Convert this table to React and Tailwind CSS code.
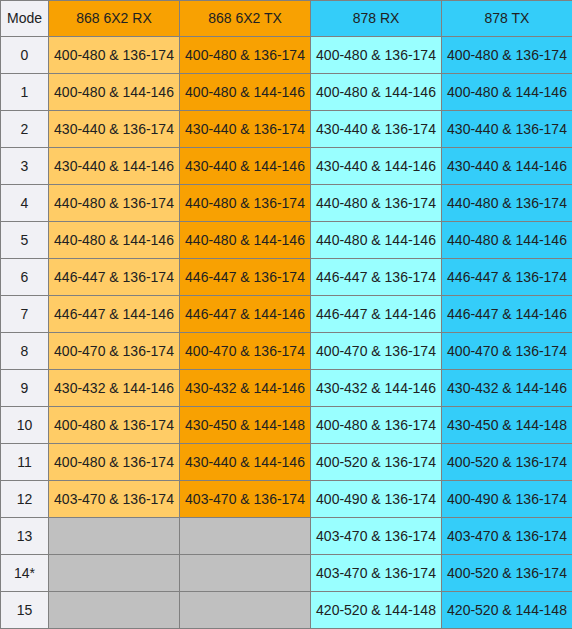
import { Fragment } from "react";

const rows = [
  ["0", "400-480 & 136-174", "400-480 & 136-174", "400-480 & 136-174", "400-480 & 136-174"],
  ["1", "400-480 & 144-146", "400-480 & 144-146", "400-480 & 144-146", "400-480 & 144-146"],
  ["2", "430-440 & 136-174", "430-440 & 136-174", "430-440 & 136-174", "430-440 & 136-174"],
  ["3", "430-440 & 144-146", "430-440 & 144-146", "430-440 & 144-146", "430-440 & 144-146"],
  ["4", "440-480 & 136-174", "440-480 & 136-174", "440-480 & 136-174", "440-480 & 136-174"],
  ["5", "440-480 & 144-146", "440-480 & 144-146", "440-480 & 144-146", "440-480 & 144-146"],
  ["6", "446-447 & 136-174", "446-447 & 136-174", "446-447 & 136-174", "446-447 & 136-174"],
  ["7", "446-447 & 144-146", "446-447 & 144-146", "446-447 & 144-146", "446-447 & 144-146"],
  ["8", "400-470 & 136-174", "400-470 & 136-174", "400-470 & 136-174", "400-470 & 136-174"],
  ["9", "430-432 & 144-146", "430-432 & 144-146", "430-432 & 144-146", "430-432 & 144-146"],
  ["10", "400-480 & 136-174", "430-450 & 144-148", "400-480 & 136-174", "430-450 & 144-148"],
  ["11", "400-480 & 136-174", "430-440 & 144-146", "400-520 & 136-174", "400-520 & 136-174"],
  ["12", "403-470 & 136-174", "403-470 & 136-174", "400-490 & 136-174", "400-490 & 136-174"],
  ["13", null, null, "403-470 & 136-174", "403-470 & 136-174"],
  ["14*", null, null, "403-470 & 136-174", "400-520 & 136-174"],
  ["15", null, null, "420-520 & 144-148", "420-520 & 144-148"],
];

const cellBg = ["bg-[#ffcc66]", "bg-[#f8a102]", "bg-[#99ffff]", "bg-[#34cdf9]"];

export default function App() {
  return (
    <div className="w-[572px] overflow-hidden bg-white font-['Liberation_Sans',Arial,sans-serif] text-[14px] text-[#202122]">
      <div className="grid w-[573px] grid-cols-[47px_130px_130px_130px_130px] gap-px bg-[#808080] py-px pl-px">
        <div className="flex h-[35px] items-center justify-center bg-[#f1f1f5]">Mode</div>
        <div className="flex h-[35px] items-center justify-center bg-[#f8a102]">868 6X2 RX</div>
        <div className="flex h-[35px] items-center justify-center bg-[#f8a102]">868 6X2 TX</div>
        <div className="flex h-[35px] items-center justify-center bg-[#34cdf9]">878 RX</div>
        <div className="flex h-[35px] items-center justify-center bg-[#34cdf9]">878 TX</div>

        {rows.map((r) => (
          <Fragment key={r[0]}>
            <div className="flex h-[36px] items-center justify-center bg-[#f1f1f5]">{r[0]}</div>
            {r.slice(1).map((v, i) => (
              <div
                key={i}
                className={
                  "flex h-[36px] items-center justify-center whitespace-nowrap " +
                  (v ? cellBg[i] : "bg-[#c0c0c0]")
                }
              >
                {v}
              </div>
            ))}
          </Fragment>
        ))}
      </div>
    </div>
  );
}
